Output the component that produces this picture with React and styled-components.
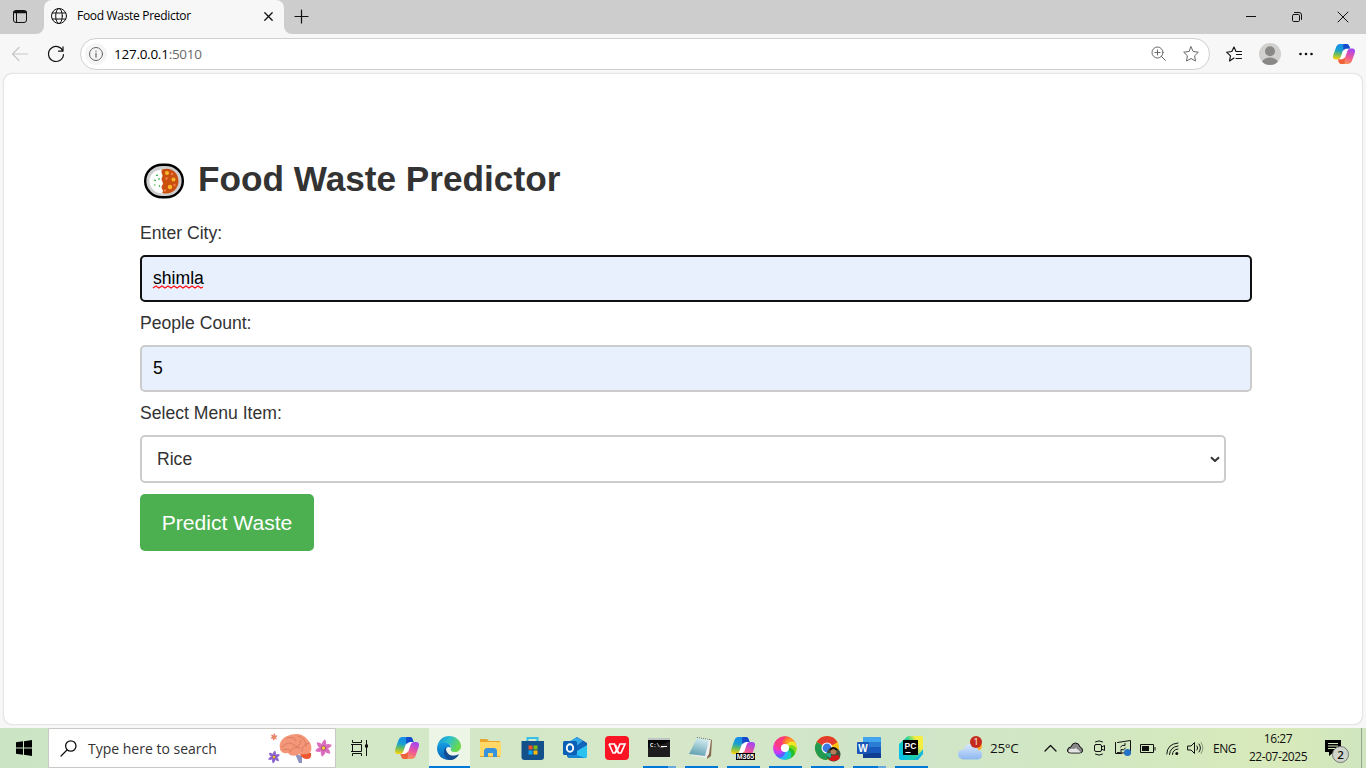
import React from "react";
import styled, { createGlobalStyle } from "styled-components";

const Global = createGlobalStyle`
  * { box-sizing: border-box; }
  html, body { margin: 0; padding: 0; background: #f7f7f7; overflow: hidden; }
  svg { display: block; flex: none; overflow: visible; }
`;
const ui = `"Open Sans", "Noto Sans", sans-serif`;

const Screen = styled.div`
  width: 1366px; height: 768px; display: flex; flex-direction: column;
  background: #f7f7f7; font-family: ${ui}; color: #111;
`;
const TabStrip = styled.div`
  height: 34px; flex: none; display: flex; align-items: stretch; background: #cdcdcd;
`;
const TabMenu = styled.div`
  width: 44px; display: flex; align-items: center; padding: 0 0 2px 12px;
  border-bottom-right-radius: 8px; background: #cdcdcd;
`;
const TabBacking = styled.div`
  display: flex; background: linear-gradient(#cdcdcd 50%, #f7f7f7 50%);
`;
const Tab = styled.div`
  width: 240px; background: #f7f7f7; border-radius: 8px 8px 0 0;
  display: flex; align-items: center; padding: 0 11px 2px 7px;
`;
const TabTitle = styled.span`
  margin: -2px 0 0 10px; flex: 1; font-size: 12px; letter-spacing: -0.31px; white-space: nowrap; color: #000;
`;
const StripBacking = styled.div`flex: 1; display: flex; background: #f7f7f7;`;
const StripRest = styled.div`
  flex: 1; display: flex; align-items: center; background: #cdcdcd;
  border-bottom-left-radius: 8px; padding: 0 18px 2px 11px;
`;
const WindowButtons = styled.div`
  margin-left: auto; display: flex; gap: 36px; align-items: center; padding-top: 1px;
`;
const Toolbar = styled.div`
  height: 40px; flex: none; display: flex; align-items: center; padding: 0 11px 0 11px;
`;
const Address = styled.div`
  width: 1130px; height: 32px; margin: 0 16px 0 15px; border: 1px solid #d0d0d0; border-radius: 16px;
  background: #fff; display: flex; align-items: center; padding: 0 10px 0 4px;
`;
const InfoBadge = styled.div`
  width: 22px; height: 22px; border-radius: 50%; background: #f5f5f5; display: grid; place-items: center;
`;
const Url = styled.span`
  margin-left: 7px; flex: 1; font-size: 13.5px; letter-spacing: -0.26px; color: #000;
  & > span { color: #6a6a6a; }
`;
const UrlActions = styled.div`display: flex; gap: 16px; align-items: center;`;
const BrowserActions = styled.div`display: flex; align-items: center;`;
const Gap = styled.div`width: ${(p) => p.$w}px; flex: none;`;

const Page = styled.main`
  height: 650px; flex: none; margin: 0 4px 4px; background: #fff; border-radius: 8px;
  box-shadow: 0 0 2px rgba(0,0,0,.28); padding: 84px 110px 0 136px; color: #333;
  font-family: "Liberation Sans", Arial, sans-serif; font-size: 17.6px;
`;
const Heading = styled.h1`
  margin: 0 0 20px; height: 42px; display: flex; align-items: center;
  font-size: 35.2px; line-height: 42px; font-weight: 700; white-space: nowrap;
  & > span { margin-left: 10px; }
`;
const Form = styled.form`display: flex; flex-direction: column; align-items: flex-start;`;
const Label = styled.label`height: 20px; line-height: 20px; margin: 3px 0 12px; white-space: nowrap;`;
const Field = styled.div`
  width: 1112px; height: 47px; margin-bottom: 8px; border-radius: 5px;
  border: 2px solid ${(p) => (p.$focus ? "#101010" : "#ccc")}; background: #e8f0fe;
  color: #000; display: flex; align-items: center; padding: 0 11px;
`;
const Misspelled = styled.span`
  position: relative;
  & > svg { position: absolute; left: 0; top: 17px; }
`;
const Select = styled.div`
  width: 1086px; height: 48px; border: 2px solid #ccc; border-radius: 5px; background: #fff;
  display: flex; align-items: center; justify-content: space-between; padding: 0 4px 0 15px;
`;
const Submit = styled.button`
  margin: 11px 0 0; width: 174px; height: 57px; border: 0; border-radius: 5px; padding: 0;
  background: #4caf50; color: #fff; font: 21.12px "Liberation Sans", Arial, sans-serif;
`;

const Taskbar = styled.footer`
  height: 40px; flex: none; display: flex;
  background: linear-gradient(90deg, #cbe5c4 0, #d3e8c6 28%, #d5e7c8 50%, #cfe5c8 65%, #d1e7c3 78%, #d8eaba 94%, #cfe5bf 100%);
`;
const Start = styled.div`width: 48px; display: grid; place-items: center;`;
const Search = styled.div`
  width: 288px; border: 1px solid #c6c9c4; background: #fff; display: flex; align-items: center;
  padding: 0 1px 0 11px; color: #333; font-size: 14px;
  & > span { margin-left: 11px; flex: 1; white-space: nowrap; }
`;
const TaskView = styled.div`width: 50px; padding-right: 3px; display: grid; place-items: center;`;
const TaskButton = styled.div`
  width: 42px; height: 40px; display: flex; justify-content: center;
  border-left: 1px solid transparent; background-clip: padding-box;
  background-color: ${(p) => (p.$active ? "#edf5e7" : "transparent")};
  box-shadow: ${(p) => (p.$active ? "inset 0 -2px #0078d7" : "none")};
`;
const TaskStack = styled.div`
  width: 33px; height: 40px; padding-top: 8px; display: flex; flex-direction: column; justify-content: space-between;
  & > svg { margin-left: 4px; }
`;
const OpenBar = styled.div`
  width: 33px; height: 2px;
  background: ${(p) => !p.$open ? "transparent" : p.$multi ? "linear-gradient(90deg,#0078d7 25px,#66a9dc 25px)" : "#0078d7"};
`;
const Tray = styled.div`margin-left: auto; display: flex; align-items: center; font-size: 12px;`;
const Weather = styled.div`
  display: flex; align-items: center; gap: 7px; margin-right: 25px; font-size: 13.5px; letter-spacing: -0.3px; width: 61px; white-space: nowrap;
`;
const TrayIcons = styled.div`display: flex; align-items: center;`;
const Lang = styled.span`margin-left: 10px; width: 24px; letter-spacing: -0.5px;`;
const Clock = styled.div`
  width: 60px; margin-left: 11px; text-align: center; line-height: 18px; letter-spacing: -0.45px; font-size: 12px; white-space: nowrap;
`;
const Notice = styled.div`
  position: relative; margin: 0 11px 0 17px; width: 25px; height: 40px; padding-top: 11px;
`;
const Count = styled.span`
  position: absolute; left: 7px; top: 18px; width: 17px; height: 17px; border-radius: 50%;
  border: 1px solid #777; background: #d0d5cb; font-size: 11.5px; font-weight: 600; line-height: 15px; text-align: center;
`;
const Peek = styled.div`width: 5px; height: 40px; border-left: 1px solid #93a58b;`;

const Icon = ({ w = 16, h = w, box, sw = 1, color = "#111", children }) => (
  <svg width={w} height={h} viewBox={box || `0 0 ${w} ${h}`} fill="none" stroke={color} strokeWidth={sw} strokeLinecap="round" strokeLinejoin="round">{children}</svg>
);

const Plate = () => (
  <svg width="48" height="42" viewBox="0 0 48 42">
    <rect x="5.200" y="6.700" width="37.600" height="32.600" rx="17" ry="16" fill="#cfcfcf" stroke="#000" strokeWidth="2.400" />
    <path d="M24 11.500C14 11.500 9.500 17 9.500 23S14 35.500 24 35.500Z" fill="#fff" />
    <path d="M22 11.500C32 8.500 38.500 15.500 38.500 23S32 37.500 22 35C25 32.500 20 30.500 22 27.500C25 24.500 20 22.500 22 19.500C24 16.500 20 15.500 22 11.500Z" fill="#ca5010" />
    <g fill="#fdb72b"><circle cx="27" cy="15" r="2" /><circle cx="33.500" cy="21.500" r="2" /><circle cx="30" cy="29" r="2.200" /></g>
    <g fill="#ef7c45"><circle cx="32" cy="16" r="1.200" /><circle cx="26.500" cy="20.500" r="1.300" /><circle cx="25" cy="32.500" r="1.200" /><circle cx="34.500" cy="27" r="1.200" /></g>
    <path d="M16 17.500l2-.5M14 22l2 .5M18 21h2M14.500 26.500l.5 1M19 27.500l1 1" stroke="#16a32b" strokeWidth="1.200" />
  </svg>
);

const Copilot = ({ size = 24, m365 }) => (
  <svg width={size} height={size} viewBox="0 0 24 24">
    <defs>
      <linearGradient id="cpA" x1="0.4" y1="0" x2="0.25" y2="1"><stop stopColor="#168bea" /><stop offset=".4" stopColor="#18a0cf" /><stop offset=".65" stopColor="#65bd62" /><stop offset="1" stopColor="#ffd00b" /></linearGradient>
      <linearGradient id="cpB" x1=".7" y1="0" x2=".3" y2="1"><stop stopColor="#a345f4" /><stop offset=".5" stopColor="#ef5799" /><stop offset="1" stopColor="#ffa04b" /></linearGradient>
    </defs>
    <path d="M10 6h8l-4 13H6Z" fill="#fff" />
    <path d="M3.500 4Q4.500 1 7.500 1H15Q17.500 1 18.500 6H15Q11.500 6 10.500 9L8.500 15Q7.500 18 5 18H3Q-1 18 .3 13Z" fill="url(#cpA)" />
    <path d="M12 1h3q2.500 0 3.500 5H15q-2.500 0-3.500 2.500Q10.500 1 12 1Z" fill="#1749cc" />
    <path d="M20.500 20Q19.500 23 16.500 23H9Q6.500 23 5.500 18H9Q12.500 18 13.500 15L15.500 9Q16.500 6 19 6H21Q25 6 23.700 11Z" fill="url(#cpB)" />
    <path d="M12 23H9q-2.500 0-3.500-5H9q2.500 0 3.500-2.500Q13.500 23 12 23Z" fill="#ed633c" />
    {m365 && <g><rect x="5" y="17" width="19" height="7" fill="#000" /><text x="14.500" y="23.300" fill="#fff" fontSize="7" fontWeight="700" fontFamily="Liberation Sans, sans-serif" textAnchor="middle">M365</text></g>}
  </svg>
);

const Edge = () => (
  <svg width="24" height="24" viewBox="0 0 24 24">
    <defs>
      <linearGradient id="eTop" x1="0" y1="0" x2="1" y2=".4"><stop stopColor="#158bd6" /><stop offset=".5" stopColor="#2bbfd0" /><stop offset="1" stopColor="#6ad94c" /></linearGradient>
      <linearGradient id="eLow" x1="0" y1="0" x2="0" y2="1"><stop stopColor="#169ce3" /><stop offset="1" stopColor="#0864b5" /></linearGradient>
    </defs>
    <path d="M0 12C1 4 6 0 12 0c7 0 12 5 12 10 0 4-3 6-6 6-3 0-5-1-4-3 .8-2 0-5-4-5-5 0-9 2-10 4Z" fill="url(#eTop)" />
    <path d="M0 12c1-4 5-6 9-5 4 .8 5 3 5 5-2-2-5-1-5 2 0 5 6 8 13 4-3 4-6 6-10 6C5 24 0 19 0 12Z" fill="url(#eLow)" />
    <path d="M9 11c-4 4-2 11 4 13 4 0 7-2 9-5.500C15 22 8 18 9 11Z" fill="#144c91" />
  </svg>
);

const Explorer = () => (
  <svg width="24" height="24" viewBox="0 0 24 24">
    <path d="M1 3h7l2 2h11v16H1Z" fill="#e8a72c" /><path d="M1 6h21v14H1Z" fill="#ffd868" />
    <path d="M5 21v-7l2-2h9l2 2v7h-4v-4H9v4Z" fill="#3793dd" />
  </svg>
);
const Store = () => (
  <svg width="24" height="24" viewBox="0 0 24 24">
    <path d="M6.500 6V2h10v4" fill="none" stroke="#35bfe9" strokeWidth="2" />
    <path d="M.5 5h22.500v16q0 3-3 3H3.500q-3 0-3-3Z" fill="#14518a" />
    <path d="M7.500 9.500h4v4h-4z" fill="#f35325" /><path d="M12.500 9.500h4v4h-4z" fill="#81bc06" /><path d="M7.500 14.500h4v4h-4z" fill="#05a6f0" /><path d="M12.500 14.500h4v4h-4z" fill="#ffba08" />
  </svg>
);
const Outlook = () => (
  <svg width="24" height="24" viewBox="0 0 24 24">
    <path d="M4 8L14 1l10 6v12q0 3-3 3H7q-3 0-3-3Z" fill="#18509e" />
    <path d="M7 5l7-4 6 4-10 8Z" fill="#32a7e7" /><path d="M10 13L20 5l4 3-13 11Z" fill="#1066bb" />
    <path d="M9 18L24 9v11q0 2-2 2H9Z" fill="#2bc2f0" /><path d="M6 16l16 6H7q-2 0-2-3Z" fill="#1686d5" />
    <rect y="5" width="14" height="14" rx="1.500" fill="#0c5fb7" /><ellipse cx="7" cy="12" rx="3.200" ry="3.800" fill="none" stroke="#fff" strokeWidth="1.900" />
  </svg>
);
const Wps = () => (
  <svg width="24" height="24" viewBox="0 0 24 24">
    <rect width="24" height="24" rx="4" fill="#fa1424" />
    <path d="M4 8h5.500l2.500 7 3-7h5l-4 9h-2.500L10.500 9M4 8l4 9h2l2-4" fill="none" stroke="#fff" strokeWidth="1.700" />
  </svg>
);
const Cmd = () => (
  <svg width="24" height="24" viewBox="0 0 24 24">
    <path d="M1 2h22v19H1Z" fill="#050505" /><path d="M1 12C8 9 14 10 23 5v16H1Z" fill="#1e1e1e" /><path d="M1 2h22v2H1Z" fill="#bfc5c5" />
    <text x="3" y="11" fill="#fff" fontSize="5.500" fontWeight="700" fontFamily="Liberation Mono, monospace">C:\_</text><path d="M14 10.500h6" stroke="#fff" />
  </svg>
);
const Notepad = () => (
  <svg width="24" height="24" viewBox="0 0 24 24">
    <defs><linearGradient id="np" x1=".6" y1="0" x2=".3" y2="1"><stop stopColor="#d4edf1" /><stop offset="1" stopColor="#5c9dad" /></linearGradient></defs>
    <path d="M20 3l3 1-1 16-4 3Z" fill="#86694c" /><path d="M18 3l4 1-2 14-3 4L2 19Z" fill="#eee" /><path d="M8 2l12 2-4 16-16-2Z" fill="url(#np)" /><path d="M8 1.500l13 2" stroke="#777" strokeDasharray="1 1" />
  </svg>
);

const ringColors = ["#ff4054", "#ff6a38", "#ff9925", "#efe826", "#7ed91d", "#24bd2d", "#1dcdbc", "#28b7ff", "#665bff", "#c83bf5", "#fd39af", "#ff3b80"];
const Ring = () => (
  <svg width="24" height="24" viewBox="0 0 24 24">
    {ringColors.map((c, i) => (
      <path key={c} d="M12 8Q12 3 17.800 2A11.600 11.600 0 0 1 23.500 13Q18 8 15.500 10Z" fill={c} transform={`rotate(${30 * i - 60} 12 12)`} />
    ))}
    <circle cx="12" cy="12" r="4" fill="#fff" />
  </svg>
);
const Chrome = () => (
  <svg width="26" height="26" viewBox="0 0 26 26">
    <circle cx="12" cy="12" r="12" fill="#fbc116" /><path d="M12 12L1.600 6A12 12 0 0 1 22.400 6Z" fill="#e33b2e" /><path d="M1.600 6A12 12 0 0 0 12 24l5-9-5-3Z" fill="#229b51" /><path d="M12 6h10.400L12 12Z" fill="#e33b2e" />
    <circle cx="12" cy="12" r="5.500" fill="#fff" /><circle cx="12" cy="12" r="4.400" fill="#3c79e2" />
    <circle cx="18.500" cy="18.500" r="7" fill="#3f513d" /><circle cx="18.500" cy="15.500" r="3" fill="#b57f5d" /><path d="M15 14q3-4 7 0" stroke="#17110e" strokeWidth="2" fill="none" /><path d="M14 24l2-4 7-1 2 3q-4 5-11 2Z" fill="#d71818" /><path d="M11 17h5v5q-5-1-5-5Z" fill="#26a98b" />
  </svg>
);
const Word = () => (
  <svg width="24" height="24" viewBox="0 0 24 24">
    <path d="M6 1h18v21H6Z" fill="#185abd" /><path d="M6 1h18v5H6Z" fill="#41a5ee" /><path d="M6 6h18v5H6Z" fill="#2b7cd3" /><path d="M6 17h18v5H6Z" fill="#103f91" />
    <rect y="6" width="12" height="12" rx="1" fill="#1855b5" /><text x="6" y="15.500" fill="#fff" fontSize="10" fontWeight="700" fontFamily="Liberation Sans, sans-serif" textAnchor="middle">W</text>
  </svg>
);
const PyCharm = () => (
  <svg width="24" height="24" viewBox="0 0 24 24">
    <defs><linearGradient id="pc" x1="0" y1=".7" x2="1" y2=".2"><stop stopColor="#08bfe9" /><stop offset=".5" stopColor="#20d19c" /><stop offset=".8" stopColor="#f5ed40" /></linearGradient></defs>
    <path d="M9 0h13q2 0 2 2v14l-8 8H2q-2 0-2-2V8Z" fill="url(#pc)" /><path d="M17 22l7-9v5l-5 6h-5Z" fill="#13b9dd" /><rect x="4" y="4" width="15" height="15" fill="#000" />
    <text x="5.500" y="13" fill="#fff" fontSize="8.500" fontWeight="700" fontFamily="Liberation Sans, sans-serif">PC</text><path d="M6.500 16.500h5" stroke="#fff" />
  </svg>
);

const Flower = ({ x, y, s, c }) => (
  <g transform={`translate(${x} ${y}) scale(${s})`}>
    {[0, 60, 120, 180, 240, 300].map((r) => <path key={r} d="M0 0Q-5-4 0-9Q4-4 0 0Z" fill={c} transform={`rotate(${r + 10})`} />)}
    <circle r="2.200" fill="#ffc83d" stroke="#6d3f75" strokeWidth=".7" />
  </g>
);
const Brain = () => (
  <svg width="65" height="30" viewBox="0 0 65 30">
    <path d="M25 20l8 3 0 7h-3l-3-7Z" fill="#8d91bc" />
    <path d="M31 19l11 1q1 6-4 6-5 0-7-5Z" fill="#ee5733" />
    <path d="M11 16Q9 7 18 3Q31-2 38 6Q45 13 41 20Q36 22 31 21Q22 25 19 20Q12 21 11 16Z" fill="#f49678" />
    <path d="M13 14q7-7 12-2t7-5M18 5q8-2 9 3M29 3q8 2 8 10M40 10q-7 2-7 8M21 19q2-6 10-4M14 17q5-2 8 1" stroke="#d67562" strokeWidth=".8" fill="none" strokeLinecap="round" />
    <Flower x={5} y={4} s={0.42} c="#f47864" /><Flower x={5} y={24} s={0.72} c="#8c62cf" /><Flower x={54.500} y={15} s={0.98} c="#dc6cbd" />
  </svg>
);

const tasks = [
  { name: "copilot", Art: Copilot }, { name: "edge", Art: Edge, active: true }, { name: "explorer", Art: Explorer },
  { name: "store", Art: Store }, { name: "outlook", Art: Outlook }, { name: "wps", Art: Wps },
  { name: "cmd", Art: Cmd, open: true, multi: true }, { name: "notepad", Art: Notepad, open: true },
  { name: "m365", Art: () => <Copilot m365 />, open: true }, { name: "ring", Art: Ring, open: true },
  { name: "chrome", Art: Chrome, open: true }, { name: "word", Art: Word, open: true, multi: true },
  { name: "pycharm", Art: PyCharm, open: true },
];

export default function App() {
  return (
    <Screen>
      <Global />
      <TabStrip>
        <TabBacking>
          <TabMenu><Icon><rect x="1.500" y="2.500" width="13" height="12" rx="2.500" /><path d="M2.500 4h11" strokeWidth="2.600" /><path d="M4.500 5v9" /></Icon></TabMenu>
          <Tab>
            <Icon><circle cx="8" cy="8" r="7.500" /><ellipse cx="8" cy="8" rx="3.300" ry="7.500" /><path d="M1.300 5h13.400M1.300 11h13.400" /></Icon>
            <TabTitle>Food Waste Predictor</TabTitle>
            <Icon w={9} sw={1.3}><path d="M.8 .8l7.400 7.400M8.200 .8L.8 8.200" /></Icon>
          </Tab>
        </TabBacking>
        <StripBacking><StripRest>
          <Icon w={13} sw={1.2}><path d="M6.500 0v13M0 6.500h13" /></Icon>
          <WindowButtons>
            <Icon w={10}><path d="M0 4.500h10" strokeLinecap="butt" /></Icon>
            <Icon w={10}><rect x=".5" y="2.500" width="7" height="7" rx="1.200" /><path d="M2.500.5h4.500q2.500 0 2.500 2.500v4.500" /></Icon>
            <Icon w={10}><path d="M0 0l10 10M10 0L0 10" /></Icon>
          </WindowButtons>
        </StripRest></StripBacking>
      </TabStrip>
      <Toolbar>
        <Icon w={18} h={16} color="#c7c7c7" sw={1.2}><path d="M16.500 8H1.500M8 1.500L1.500 8 8 14.500" /></Icon>
        <Gap $w={18} />
        <Icon w={17} h={17} sw={1.2}><path d="M16 5.200A7.500 7.500 0 1 0 16.500 8.500M16 .8v4.400h-4.400" /></Icon>
        <Gap $w={1} />
        <Address>
          <InfoBadge><Icon w={14} color="#666"><circle cx="7" cy="7" r="6.500" /><path d="M7 6.200v4M7 4v.2" strokeWidth="1.200" /></Icon></InfoBadge>
          <Url>127.0.0.1<span>:5010</span></Url>
          <UrlActions>
            <Icon color="#666"><circle cx="6.500" cy="6.500" r="5.500" /><path d="M10.500 10.500l4 4M4 6.500h5M6.500 4v5" /></Icon>
            <Icon color="#666"><path d="M8 .8l2.200 4.700 5.100.7-3.700 3.600.9 5.200L8 12.500 3.500 15l.9-5.200L.7 6.200l5.100-.7Z" /></Icon>
          </UrlActions>
        </Address>
        <BrowserActions>
          <Icon w={16} h={16} sw={1.15}><path d="M8 12L3.500 15l1-5.200L.6 6.200l5.200-.7L8 1l2 4.500h5.500M10.500 8.500h5M10 12.500h5.500" /></Icon>
          <Gap $w={17} />
          <svg width="22" height="22" viewBox="0 0 22 22"><circle cx="11" cy="11" r="11" fill="#d2d0ce" /><circle cx="11" cy="8.200" r="5" fill="#8a8886" /><path d="M3 18.500q3-4 8-4t8 4q-3 3.500-8 3.500t-8-3.500Z" fill="#8a8886" /></svg>
          <Gap $w={18} />
          <Icon w={14} h={4}><g fill="#111" stroke="none"><circle cx="1.500" cy="2" r="1.300" /><circle cx="7" cy="2" r="1.300" /><circle cx="12.500" cy="2" r="1.300" /></g></Icon>
          <Gap $w={20} />
          <Copilot size={22} />
        </BrowserActions>
      </Toolbar>
      <Page>
        <Heading><Plate /><span>Food Waste Predictor</span></Heading>
        <Form>
          <Label>Enter City:</Label>
          <Field $focus>
            <Misspelled>shimla
              <svg width="51" height="4" viewBox="0 0 51 4"><path d="M0 3l3-2 3 2 3-2 3 2 3-2 3 2 3-2 3 2 3-2 3 2 3-2 3 2 3-2 3 2 3-2 3 2 2-1" fill="none" stroke="#f11" strokeWidth="1.200" /></svg>
            </Misspelled>
          </Field>
          <Label>People Count:</Label>
          <Field>5</Field>
          <Label>Select Menu Item:</Label>
          <Select>Rice<Icon w={10} h={6} sw={2} color="#333"><path d="M1 1.200L5 5 9 1.200" strokeLinecap="butt" /></Icon></Select>
          <Submit type="button">Predict Waste</Submit>
        </Form>
      </Page>
      <Taskbar>
        <Start><svg width="16" height="16" viewBox="0 0 16 16"><path d="M0 2.300L7 1.300V7.500H0ZM8 1.200L16 0V7.500H8ZM0 8.500H7V14.700L0 13.700ZM8 8.500H16V16L8 14.800Z" fill="#000" /></svg></Start>
        <Search>
          <Icon w={17} sw={1.3}><circle cx="10.800" cy="6" r="5.200" /><path d="M7 10L1 16" /></Icon>
          <span>Type here to search</span><Brain />
        </Search>
        <TaskView><Icon w={17} h={16}><path d="M1.500 0v2.500h9V0M1.500 16v-2.500h9V16M1.500 4.500h9v7h-9zM15.500 0v16M0 4.500h2M0 11.500h2" strokeLinecap="butt" /><path d="M14 4.500h3v3h-3z" fill="#111" stroke="none" /></Icon></TaskView>
        {tasks.map(({ name, Art, active, open, multi }) => (
          <TaskButton key={name} $active={active}><TaskStack><Art />{!active && <OpenBar $open={open} $multi={multi} />}</TaskStack></TaskButton>
        ))}
        <Tray>
          <Weather>
            <svg width="25" height="26" viewBox="0 0 25 26"><defs><linearGradient id="cloud" x1="0" y1="0" x2="0" y2="1"><stop stopColor="#dbe9ff" /><stop offset="1" stopColor="#8db7ef" /></linearGradient></defs><circle cx="19" cy="11" r="5" fill="#ffac27" /><path d="M5 24.500q-5-1-5-5 0-5 6-5 1-6 7-6 5 0 7 6 4 1 4 5 0 5-5 5Z" fill="url(#cloud)" /><circle cx="18" cy="7" r="6" fill="#c42b1c" /><text x="18" y="10.300" textAnchor="middle" fontSize="9" fill="#fff" fontFamily="Open Sans, sans-serif">1</text></svg>
            25°C
          </Weather>
          <TrayIcons>
            <Icon w={12} h={8} sw={1.3}><path d="M1 7L6.500 1.500 12 7" /></Icon>
            <Gap $w={11} />
            <Icon w={16} h={12}><path d="M4 11Q0 11 .5 8 1 5 4 5 5 1 8.500 1q3.500 0 4.500 4 3 1 2.500 4 0 2-3 2Z" fill="#888" /><path d="M4 10.500Q1 10 2 8q2-2 5-1l2-1 5 4.500Z" fill="#e4e4e4" stroke="none" /></Icon>
            <Gap $w={9} />
            <Icon w={14} h={16}><rect x="2.500" y="4.500" width="7" height="7" rx="1.500" /><path d="M9.500 7.200l3-1.700v5L9.500 9M3.500 1.800q3.500-2 7 0M3.500 14.200q3.500 2 7 0" /></Icon>
            <Gap $w={8} />
            <Icon w={18} h={17}><path d="M3.500 2.500L16.500 .5v13l-13-1M1.500 2.500v11h6M6.500 7q1.500-2.500 4.500-1.500V3.500M11.500 8q-1.500 3-4.500 1.500V11.500" /><circle cx="13.500" cy="12.500" r="3.500" fill="#2472c8" stroke="none" /></Icon>
            <Gap $w={8} />
            <Icon w={16} h={8}><path d="M.5 .5h13v8H.5ZM15 3v3.500" strokeLinecap="butt" strokeLinejoin="miter" /><path d="M2 2h7v5H2Z" fill="#111" stroke="none" /></Icon>
            <Gap $w={10} />
            <Icon w={13} h={13}><path d="M.8 12Q1 2 12 1M3.500 12.500Q4 5 12 4M6.500 12.500q0-5 5.500-5.500" /><circle cx="10.800" cy="11.500" r="1.500" fill="#111" stroke="none" /></Icon>
            <Gap $w={8} />
            <Icon w={16} h={14}><path d="M1 5h3l3.500-3.500v11L4 9H1ZM10 5q1.500 2 0 4M12 3q3 4 0 8" /><path d="M14 1.500q4 5.500 0 11" stroke="#8b9982" /></Icon>
          </TrayIcons>
          <Lang>ENG</Lang>
          <Clock>16:27<br />22-07-2025</Clock>
          <Notice><svg width="17" height="18" viewBox="0 0 17 18"><path d="M0 1h16v12H9l-5 4v-4H0Z" fill="#000" /><path d="M3 4.500h10M3 7h10M3 9.500h7" stroke="#d4e7bd" /></svg><Count>2</Count></Notice>
          <Peek />
        </Tray>
      </Taskbar>
    </Screen>
  );
}
